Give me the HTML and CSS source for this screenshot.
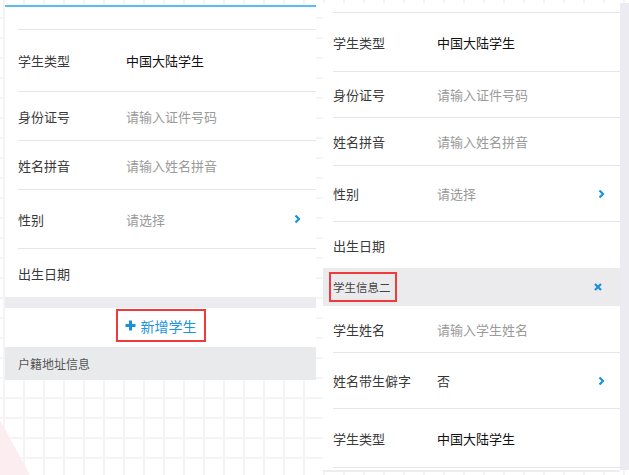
FILE: index.html
```html
<!DOCTYPE html>
<html lang="zh">
<head>
<meta charset="utf-8">
<title>学生信息</title>
<link rel="stylesheet" href="styles.css">
</head>
<body>
<div class="deco"></div>
<div class="stage">
  <section class="panel panel-left">
    <div class="row top"><div class="row-in h22"></div></div>
    <div class="row"><div class="row-in h61"><span class="label">学生类型</span><span class="value strong">中国大陆学生</span></div></div>
    <div class="row"><div class="row-in h48"><span class="label">身份证号</span><span class="value ph">请输入证件号码</span></div></div>
    <div class="row"><div class="row-in h48"><span class="label">姓名拼音</span><span class="value ph">请输入姓名拼音</span></div></div>
    <div class="row"><div class="row-in h58"><span class="label">性别</span><span class="value ph">请选择</span>
      <svg class="chev" width="7" height="10" viewBox="0 0 7 10"><path d="M1.5 1.5 L5 5 L1.5 8.5" fill="none" stroke="#1a93dc" stroke-width="2.2"/></svg></div></div>
    <div class="row"><div class="row-in h48 nob"><span class="label">出生日期</span></div></div>
    <div class="band-thin"></div>
    <div class="add-wrap">
      <div class="add-btn">
        <svg class="plus" width="11" height="11" viewBox="0 0 11 11"><path d="M5.5 0.5 V10.5 M0.5 5.5 H10.5" stroke="#1a8fdd" stroke-width="3"/></svg>
        <span>新增学生</span>
      </div>
    </div>
    <div class="section-head">户籍地址信息</div>
  </section>

  <section class="panel panel-right">
    <div class="row r"><div class="row-in h9"></div></div>
    <div class="row r"><div class="row-in h58"><span class="label">学生类型</span><span class="value strong">中国大陆学生</span></div></div>
    <div class="row r"><div class="row-in h45"><span class="label">身份证号</span><span class="value ph">请输入证件号码</span></div></div>
    <div class="row r"><div class="row-in h47"><span class="label">姓名拼音</span><span class="value ph">请输入姓名拼音</span></div></div>
    <div class="row r"><div class="row-in h55"><span class="label">性别</span><span class="value ph">请选择</span>
      <svg class="chev" width="7" height="10" viewBox="0 0 7 10"><path d="M1.5 1.5 L5 5 L1.5 8.5" fill="none" stroke="#1a93dc" stroke-width="2.2"/></svg></div></div>
    <div class="row r"><div class="row-in h46 nob"><span class="label">出生日期</span></div></div>
    <div class="group-head">
      <span class="group-title">学生信息二</span>
      <svg class="close" width="8" height="8" viewBox="0 0 8 8"><path d="M1 1 L7 7 M7 1 L1 7" stroke="#1a8fdd" stroke-width="2.2"/></svg>
    </div>
    <div class="row r"><div class="row-in h46"><span class="label">学生姓名</span><span class="value ph">请输入学生姓名</span></div></div>
    <div class="row r"><div class="row-in h55"><span class="label">姓名带生僻字</span><span class="value">否</span>
      <svg class="chev" width="7" height="10" viewBox="0 0 7 10"><path d="M1.5 1.5 L5 5 L1.5 8.5" fill="none" stroke="#1a93dc" stroke-width="2.2"/></svg></div></div>
    <div class="row r"><div class="row-in h58"><span class="label">学生类型</span><span class="value strong">中国大陆学生</span></div></div>
    <div class="panel-foot"></div>
  </section>
  <div class="side-strip"></div>
</div>
</body>
</html>
```

FILE: styles.css
```css
html, body {
  margin: 0;
  padding: 0;
}
body {
  width: 629px;
  height: 475px;
  overflow: hidden;
  position: relative;
  font-family: "Noto Sans CJK SC", "Microsoft YaHei", sans-serif;
  font-size: 13px;
  color: #333;
  background-color: #fff;
  background-image:
    linear-gradient(to right, #f4f4f6 2px, transparent 2px),
    linear-gradient(to bottom, #f4f4f6 2px, transparent 2px);
  background-size: 20px 20px;
  background-position: 3px 17px;
}
.deco {
  position: absolute;
  left: 0;
  bottom: 0;
  width: 30px;
  height: 55px;
  background: #fcedf0;
  clip-path: polygon(0 0, 100% 100%, 0 100%);
}
.stage {
  position: relative;
  display: flex;
  align-items: flex-start;
  padding-left: 5px;
}
.panel {
  background: #fff;
}
.panel-left {
  width: 311px;
  margin-top: 5px;
  border-top: 2px solid #58bff0;
}
.panel-right {
  width: 297px;
  margin-top: 3px;
  margin-left: 7px;
  box-shadow: 0 2px 0 #eeeef1;
}
.side-strip {
  width: 9px;
  height: 467px;
  margin-top: 3px;
  background: #ecebf1;
}
.row {
  margin-left: 13px;
}
.row.r {
  margin-left: 10px;
}
.row-in {
  display: flex;
  align-items: center;
  border-bottom: 1px solid #e6e6e8;
  padding-right: 15px;
}
.row-in.nob {
  border-bottom: none;
}
.h9 { height: 9px; }
.h22 { height: 22px; }
.h45 { height: 45px; }
.h46 { height: 46px; }
.h47 { height: 47px; }
.h48 { height: 48px; }
.h55 { height: 55px; }
.h58 { height: 58px; }
.h61 { height: 61px; }
.label {
  width: 108px;
  flex: none;
  color: #3a3a3a;
}
.panel-right .label {
  width: 104px;
}
.value {
  flex: 1;
  color: #333;
}
.value.ph {
  color: #9a9a9a;
}
.value.strong {
  color: #111;
}
.chev {
  flex: none;
  display: block;
}
.band-thin {
  height: 11px;
  background: #ececf0;
}
.add-wrap {
  height: 39px;
  display: flex;
  justify-content: center;
  align-items: flex-start;
}
.add-btn {
  margin-top: 1px;
  width: 86px;
  height: 29px;
  border: 2px solid #ef3b3b;
  display: flex;
  align-items: center;
  justify-content: center;
  gap: 5px;
  color: #1d93e0;
  font-size: 14px;
}
.plus {
  display: block;
}
.section-head {
  height: 33px;
  background: #e9eaec;
  padding-left: 13px;
  display: flex;
  align-items: center;
  font-size: 12px;
  color: #555;
}
.group-head {
  height: 38px;
  background: #ebebee;
  display: flex;
  align-items: center;
  justify-content: space-between;
  padding-left: 6px;
  padding-right: 18px;
}
.group-title {
  border: 2px solid #ef3b3b;
  height: 30px;
  width: 68px;
  box-sizing: border-box;
  padding-left: 2px;
  display: flex;
  align-items: center;
  font-size: 11.5px;
  color: #444;
  white-space: nowrap;
}
.close {
  display: block;
}
.panel-foot {
  height: 2px;
}
```
